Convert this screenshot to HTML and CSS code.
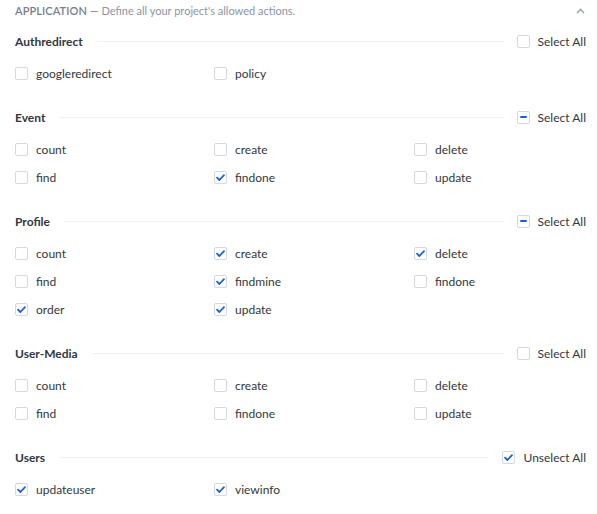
FILE: index.html
```html
<!DOCTYPE html>
<html>
<head>
<meta charset="utf-8">
<link rel="stylesheet" href="styles.css">
</head>
<body>
<div class="panel">
  <div class="header">
    <div class="title"><span class="app">APPLICATION</span><span class="dash"> — </span><span class="desc">Define all your project's allowed actions.</span></div>
    <svg class="chev" width="9" height="6" viewBox="0 0 9 6"><path d="M1 5 L4.5 1.5 L8 5" fill="none" stroke="#9ea7b8" stroke-width="1.6"/></svg>
  </div>

  <section class="group">
    <div class="ghead"><span class="gname">Authredirect</span><span class="rule"></span><label class="all"><span class="cb"></span>Select All</label></div>
    <div class="grid">
      <label class="item"><span class="cb"></span>googleredirect</label>
      <label class="item"><span class="cb"></span>policy</label>
    </div>
  </section>

  <section class="group">
    <div class="ghead"><span class="gname">Event</span><span class="rule"></span><label class="all"><span class="cb minus"><i></i></span>Select All</label></div>
    <div class="grid">
      <label class="item"><span class="cb"></span>count</label>
      <label class="item"><span class="cb"></span>create</label>
      <label class="item"><span class="cb"></span>delete</label>
      <label class="item"><span class="cb"></span>find</label>
      <label class="item"><span class="cb on"><svg viewBox="0 0 13 13"><path d="M3 6.6 L5.4 9 L10 4.2"/></svg></span>findone</label>
      <label class="item"><span class="cb"></span>update</label>
    </div>
  </section>

  <section class="group">
    <div class="ghead"><span class="gname">Profile</span><span class="rule"></span><label class="all"><span class="cb minus"><i></i></span>Select All</label></div>
    <div class="grid">
      <label class="item"><span class="cb"></span>count</label>
      <label class="item"><span class="cb on"><svg viewBox="0 0 13 13"><path d="M3 6.6 L5.4 9 L10 4.2"/></svg></span>create</label>
      <label class="item"><span class="cb on"><svg viewBox="0 0 13 13"><path d="M3 6.6 L5.4 9 L10 4.2"/></svg></span>delete</label>
      <label class="item"><span class="cb"></span>find</label>
      <label class="item"><span class="cb on"><svg viewBox="0 0 13 13"><path d="M3 6.6 L5.4 9 L10 4.2"/></svg></span>findmine</label>
      <label class="item"><span class="cb"></span>findone</label>
      <label class="item"><span class="cb on"><svg viewBox="0 0 13 13"><path d="M3 6.6 L5.4 9 L10 4.2"/></svg></span>order</label>
      <label class="item"><span class="cb on"><svg viewBox="0 0 13 13"><path d="M3 6.6 L5.4 9 L10 4.2"/></svg></span>update</label>
    </div>
  </section>

  <section class="group">
    <div class="ghead"><span class="gname">User-Media</span><span class="rule"></span><label class="all"><span class="cb"></span>Select All</label></div>
    <div class="grid">
      <label class="item"><span class="cb"></span>count</label>
      <label class="item"><span class="cb"></span>create</label>
      <label class="item"><span class="cb"></span>delete</label>
      <label class="item"><span class="cb"></span>find</label>
      <label class="item"><span class="cb"></span>findone</label>
      <label class="item"><span class="cb"></span>update</label>
    </div>
  </section>

  <section class="group">
    <div class="ghead"><span class="gname">Users</span><span class="rule"></span><label class="all"><span class="cb on"><svg viewBox="0 0 13 13"><path d="M3 6.6 L5.4 9 L10 4.2"/></svg></span>Unselect All</label></div>
    <div class="grid">
      <label class="item"><span class="cb on"><svg viewBox="0 0 13 13"><path d="M3 6.6 L5.4 9 L10 4.2"/></svg></span>updateuser</label>
      <label class="item"><span class="cb on"><svg viewBox="0 0 13 13"><path d="M3 6.6 L5.4 9 L10 4.2"/></svg></span>viewinfo</label>
    </div>
  </section>
</div>
</body>
</html>
```

FILE: styles.css
```css
html, body {
  margin: 0;
  padding: 0;
  background: #ffffff;
}
body {
  font-family: Lato, "Open Sans", sans-serif;
  font-size: 12px;
  color: #333740;
}
.panel {
  padding: 0 11px 0 15px;
}
.header {
  height: 22px;
  display: flex;
  align-items: center;
  justify-content: space-between;
}
.title {
  font-size: 11px;
  line-height: 16px;
}
.app {
  color: #787e8f;
  font-weight: 600;
  letter-spacing: 0.1px;
}
.dash {
  color: #787e8f;
}
.desc {
  color: #8c94a6;
}
.chev {
  margin-right: 1px;
  margin-top: -1px;
}
.group {
  margin-top: 9px;
}
.group + .group {
  margin-top: 20px;
}
.ghead {
  height: 20px;
  display: flex;
  align-items: center;
}
.gname {
  font-weight: 700;
  color: #333740;
}
.rule {
  flex: 1;
  height: 1px;
  background: #f0f1f4;
  margin: 1px 13px 0 14px;
}
.all {
  display: flex;
  align-items: center;
  gap: 8px;
  color: #333740;
}
.grid {
  margin-top: 8px;
  display: grid;
  grid-template-columns: 199px 200px 1fr;
}
.item {
  height: 28px;
  display: flex;
  align-items: center;
  gap: 8px;
}
.cb {
  box-sizing: border-box;
  width: 13px;
  height: 13px;
  border: 1px solid #d5d8de;
  border-radius: 2px;
  background: #fff;
  display: flex;
  align-items: center;
  justify-content: center;
  flex: none;
}
.cb svg {
  width: 13px;
  height: 13px;
  flex: none;
}
.cb svg path {
  fill: none;
  stroke: #1c5de7;
  stroke-width: 1.8;
  stroke-linecap: round;
  stroke-linejoin: round;
}
.cb.minus i {
  display: block;
  width: 7px;
  height: 2px;
  background: #1c5de7;
  border-radius: 1px;
}
```
